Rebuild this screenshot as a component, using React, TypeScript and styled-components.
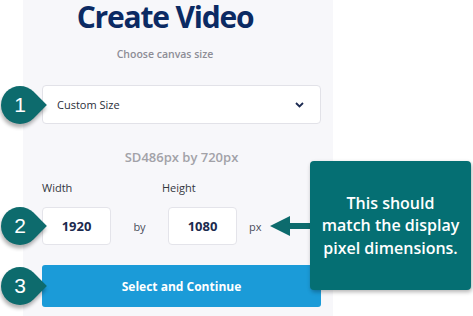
import styled, { createGlobalStyle } from "styled-components";

const GlobalStyle = createGlobalStyle`
  html, body {
    margin: 0;
    padding: 0;
    background: #ffffff;
  }
  body {
    font-family: "Open Sans", "Liberation Sans", sans-serif;
  }
`;

const Screen = styled.div`
  position: relative;
  width: 473px;
  height: 316px;
  overflow: hidden;
  background: #ffffff;
`;

const Panel = styled.div`
  margin-left: 23px;
  width: 310px;
  height: 316px;
  box-sizing: border-box;
  padding: 0 12px 0 19px;
  background: #f7f7fa;
  display: flex;
  flex-direction: column;
`;

const Header = styled.div`
  display: flex;
  flex-direction: column;
  align-items: center;
  padding-right: 33px;
`;

const Title = styled.h1`
  margin: 0;
  font-size: 30px;
  line-height: 34px;
  font-weight: 700;
  letter-spacing: -1.2px;
  color: #0b2a63;
`;

const Subtitle = styled.p`
  margin: 12px 0 0;
  font-size: 10.5px;
  line-height: 16px;
  font-weight: 600;
  color: #8d8d96;
`;

const Row = styled.div<{ top: number }>`
  position: relative;
  margin-top: ${(p) => p.top}px;
`;

const SelectBox = styled.div`
  height: 39px;
  box-sizing: border-box;
  border: 1px solid #e2e2e8;
  border-radius: 4px;
  background: #ffffff;
  display: flex;
  align-items: center;
  justify-content: space-between;
  padding: 0 16px 0 14px;
  font-size: 11px;
  color: #2b2f3a;
`;

const SizeInfo = styled.div`
  margin-top: 24px;
  text-align: center;
  font-size: 13px;
  line-height: 18px;
  font-weight: 600;
  color: #a2a2a8;
`;

const Labels = styled.div`
  margin-top: 14px;
  display: flex;
  font-size: 11px;
  line-height: 16px;
  color: #33363d;
`;

const Label = styled.span<{ width: number }>`
  width: ${(p) => p.width}px;
`;

const Inputs = styled.div`
  display: flex;
  align-items: center;
  font-size: 11px;
  color: #4a4e5a;
`;

const NumberBox = styled.div`
  width: 69px;
  height: 38px;
  box-sizing: border-box;
  border: 1px solid #e4e4ea;
  border-radius: 4px;
  background: #ffffff;
  display: flex;
  align-items: center;
  justify-content: center;
  font-size: 13px;
  font-weight: 700;
  color: #1b2a4e;
`;

const Joiner = styled.span`
  width: 57px;
  text-align: center;
`;

const Unit = styled.span`
  margin-left: 12px;
`;

const Button = styled.button`
  width: 100%;
  height: 42px;
  border: none;
  border-radius: 3px;
  background: #1b9bd8;
  color: #ffffff;
  font-family: "Open Sans", "Liberation Sans", sans-serif;
  font-size: 12px;
  font-weight: 700;
`;

const Badge = styled.div`
  position: absolute;
  left: -41px;
  top: 50%;
  width: 38px;
  height: 38px;
  margin-top: -19px;
  display: flex;
  align-items: center;
  justify-content: center;
  color: #ffffff;
  font-family: "Liberation Sans", Arial, sans-serif;
  font-size: 21px;
  &::before {
    content: "";
    position: absolute;
    inset: 0;
    background: #0d6b6d;
    border-radius: 50% 0 50% 50%;
    transform: rotate(45deg);
    box-shadow: 2px 3px 4px rgba(0, 0, 0, 0.3);
  }
  span {
    position: relative;
  }
`;

const Callout = styled.div`
  position: absolute;
  left: 310px;
  top: 161px;
  width: 161px;
  height: 129px;
  border-radius: 4px;
  background: #056f73;
  box-shadow: 1px 2px 4px rgba(0, 0, 0, 0.3);
  display: flex;
  align-items: center;
  justify-content: center;
  text-align: center;
  color: #ffffff;
  font-size: 16px;
  line-height: 22.5px;
  font-weight: 600;
`;

const Arrow = styled.svg`
  position: absolute;
  left: 268px;
  top: 214px;
`;

function Chevron() {
  return (
    <svg width="9" height="6" viewBox="0 0 9 6">
      <path d="M1 1l3.5 3.5L8 1" fill="none" stroke="#1d2b52" strokeWidth="1.8" />
    </svg>
  );
}

function Marker({ n }: { n: number }) {
  return (
    <Badge>
      <span>{n}</span>
    </Badge>
  );
}

export default function App() {
  return (
    <>
      <GlobalStyle />
      <Screen>
        <Panel>
          <Header>
            <Title>Create Video</Title>
            <Subtitle>Choose canvas size</Subtitle>
          </Header>
          <Row top={23}>
            <Marker n={1} />
            <SelectBox>
              <span>Custom Size</span>
              <Chevron />
            </SelectBox>
          </Row>
          <SizeInfo>SD486px by 720px</SizeInfo>
          <Labels>
            <Label width={120}>Width</Label>
            <Label width={60}>Height</Label>
          </Labels>
          <Row top={11}>
            <Marker n={2} />
            <Inputs>
              <NumberBox>1920</NumberBox>
              <Joiner>by</Joiner>
              <NumberBox>1080</NumberBox>
              <Unit>px</Unit>
            </Inputs>
          </Row>
          <Row top={20}>
            <Marker n={3} />
            <Button>Select and Continue</Button>
          </Row>
        </Panel>
        <Arrow width="44" height="24" viewBox="0 0 44 24">
          <path d="M2 12L22 2v7h22v6H22v7z" fill="#0d6b6d" />
        </Arrow>
        <Callout>
          This should
          <br />
          match the display
          <br />
          pixel dimensions.
        </Callout>
      </Screen>
    </>
  );
}
